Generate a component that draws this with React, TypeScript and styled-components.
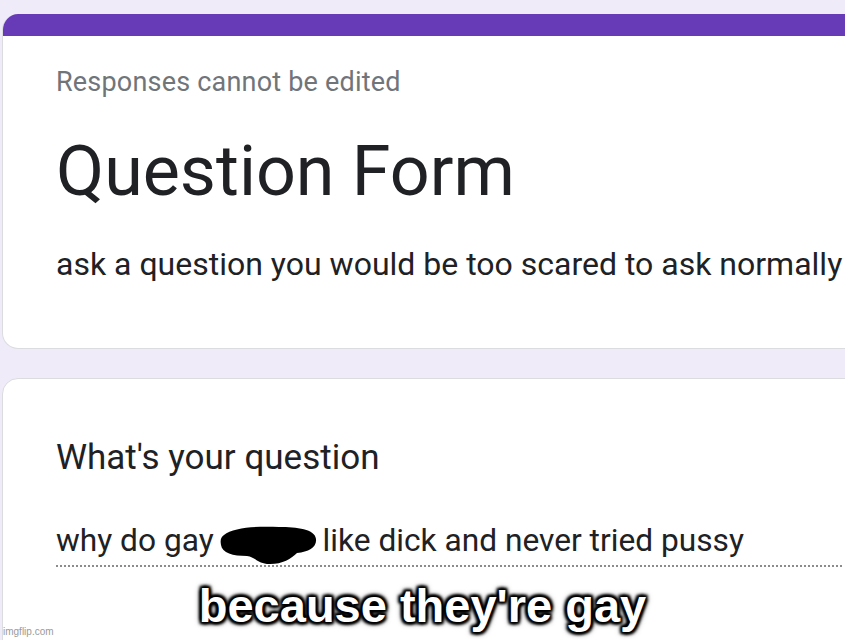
import React from "react";
import styled, { createGlobalStyle } from "styled-components";

const GlobalStyle = createGlobalStyle`
  html, body {
    margin: 0;
    padding: 0;
    background: #efebf8;
  }
  body {
    font-family: Roboto, "Noto Sans", Arial, sans-serif;
    color: #202124;
  }
`;

const Page = styled.div`
  position: relative;
  width: 845px;
  height: 640px;
  overflow: hidden;
  background: #efebf8;
  padding-top: 14px;
  box-sizing: border-box;
`;

const Stack = styled.div`
  display: flex;
  flex-direction: column;
  gap: 29px;
  margin-left: 2px;
  width: 920px;
`;

const Card = styled.div<{ $accent?: boolean }>`
  background: #fff;
  border: 1px solid #dadce0;
  border-top: ${(p) => (p.$accent ? "none" : "1px solid #dadce0")};
  border-radius: 16px;
  overflow: hidden;
  box-sizing: border-box;
`;

const AccentBar = styled.div`
  height: 22px;
  background: #673ab7;
`;

const Body = styled.div<{ $top: number; $bottom: number }>`
  padding: ${(p) => p.$top}px 0 ${(p) => p.$bottom}px 53px;
  display: flex;
  flex-direction: column;
  align-items: flex-start;
`;

const Notice = styled.div`
  font-size: 27px;
  line-height: 32px;
  color: #70757a;
  letter-spacing: 0.2px;
`;

const Title = styled.h1`
  margin: 33px 0 0;
  font-size: 70px;
  line-height: 80px;
  font-weight: 400;
  color: #202124;
`;

const Description = styled.div`
  margin-top: 35px;
  font-size: 32px;
  line-height: 36px;
  white-space: nowrap;
`;

const QuestionLabel = styled.div`
  font-size: 35px;
  line-height: 40px;
`;

const Answer = styled.div`
  margin-top: 47px;
  width: 786px;
  font-size: 31.7px;
  line-height: 32px;
  border-bottom: 2px dotted #8c8c8c;
  white-space: nowrap;
`;

const Scribble = styled.svg`
  display: inline-block;
  width: 98px;
  height: 40px;
  vertical-align: -14px;
  margin: 0 -2px 0 5px;
  overflow: visible;
`;

const Caption = styled.div`
  position: absolute;
  left: 0;
  right: 0;
  top: 580px;
  text-align: center;
  font-family: "Liberation Sans", Arial, sans-serif;
  font-weight: 700;
  font-size: 47px;
  line-height: 52px;
  color: #fff;
  text-shadow:
    0 0 2px #000, 0 0 3px #000, 0 0 4px #000, 0 0 5px #000, 0 0 7px #000,
    2px 2px 3px #000, -2px -2px 3px #000, 2px -2px 3px #000, -2px 2px 3px #000;
`;

const Watermark = styled.div`
  position: absolute;
  left: 3px;
  bottom: 3px;
  font-family: "Liberation Sans", Arial, sans-serif;
  font-size: 10px;
  color: #9a9a9a;
`;

export default function App() {
  return (
    <>
      <GlobalStyle />
      <Page>
        <Stack>
          <Card $accent>
            <AccentBar />
            <Body $top={30} $bottom={66}>
              <Notice>Responses cannot be edited</Notice>
              <Title>Question Form</Title>
              <Description>
                ask a question you would be too scared to ask normally
              </Description>
            </Body>
          </Card>
          <Card>
            <Body $top={59} $bottom={120}>
              <QuestionLabel>What's your question</QuestionLabel>
              <Answer>
                why do gay
                <Scribble viewBox="0 0 98 40">
                  <path
                    d="M5 10 C 14 2, 40 1, 60 2 C 78 2, 96 4, 97 14 C 98 22, 90 27, 78 28 C 72 34, 62 40, 48 39 C 38 38, 36 32, 28 31 C 14 31, 3 28, 2 20 C 1 15, 2 12, 5 10 Z"
                    fill="#000"
                  />
                </Scribble>{" "}
                like dick and never tried pussy
              </Answer>
            </Body>
          </Card>
        </Stack>
        <Caption>because they're gay</Caption>
        <Watermark>imgflip.com</Watermark>
      </Page>
    </>
  );
}
